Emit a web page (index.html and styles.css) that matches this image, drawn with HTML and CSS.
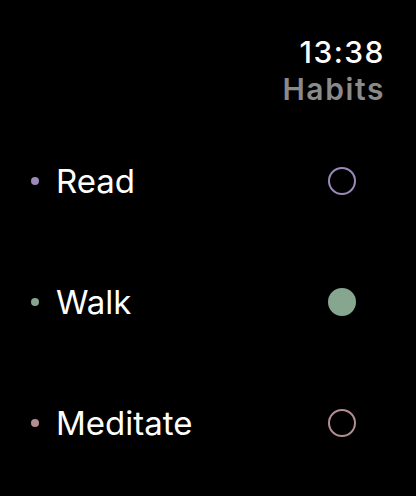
FILE: index.html
```html
<!DOCTYPE html>
<html lang="en">
<head>
  <meta charset="UTF-8" />
  <title>Habits</title>
  <link rel="stylesheet" href="styles.css">
</head>
<body>
  <div class="screen">
    <!-- Header -->
    <div class="header">
      <div class="clock">13:38</div>
      <div class="title">Habits</div>
    </div>

    <!-- Habit list -->
    <div class="habits">
      <div class="habit read">
        <span class="dot"></span>
        <span class="name">Read</span>
        <span class="check"></span>
      </div>
      <div class="habit walk">
        <span class="dot"></span>
        <span class="name">Walk</span>
        <span class="check done"></span>
      </div>
      <div class="habit meditate">
        <span class="dot"></span>
        <span class="name">Meditate</span>
        <span class="check"></span>
      </div>
    </div>
  </div>
</body>
</html>
```

FILE: styles.css
```css
* {
  margin: 0;
  padding: 0;
  box-sizing: border-box;
}

body {
  background-color: #000;
  color: #fff;
  font-family: Inter, "Noto Sans", sans-serif;
  width: 416px;
  height: 496px;
  overflow: hidden;
}

.screen {
  display: flex;
  flex-direction: column;
}

/* Header */
.header {
  display: flex;
  flex-direction: column;
  align-items: flex-end;
  padding: 33px 31px 0 0;
}

.clock {
  font-size: 30px;
  font-weight: 500;
  line-height: 38px;
  letter-spacing: 1.5px;
}

.title {
  font-size: 30px;
  font-weight: 600;
  line-height: 36px;
  letter-spacing: 1.6px;
  color: #8a8a8a;
}

/* Habit rows */
.habits {
  display: flex;
  flex-direction: column;
  gap: 83px;
  padding-top: 55px;
}

.habit {
  display: flex;
  align-items: center;
  height: 38px;
  padding: 0 60px 0 31px;
}

.dot {
  width: 8px;
  height: 8px;
  border-radius: 50%;
  margin-right: 17px;
}

.name {
  flex: 1;
  font-size: 33px;
  font-weight: 400;
}

.check {
  width: 28px;
  height: 28px;
  border-radius: 50%;
  border: 2.5px solid currentColor;
}

.check.done {
  background-color: currentColor;
}

.read .dot { background-color: #9b89ba; }
.read .check { color: #9b89ba; }

.walk .dot { background-color: #86a690; }
.walk .check { color: #86a690; }

.meditate .dot { background-color: #b48d94; }
.meditate .check { color: #b48d94; }
```
